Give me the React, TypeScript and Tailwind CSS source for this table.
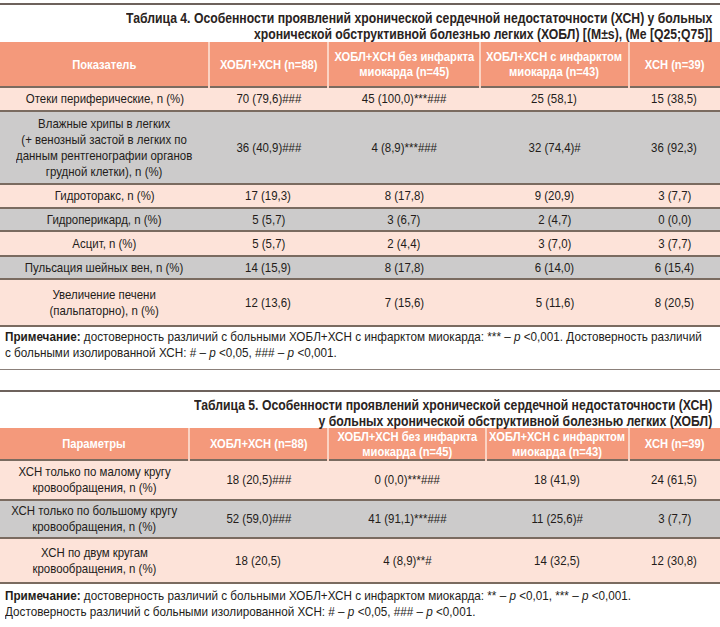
import React from 'react';

const sans = "font-['Liberation_Sans',Arial,sans-serif]";

type Row = { label: React.ReactNode; cells: string[]; tone: 'peach' | 'gray'; h: string };

const t4cols = ['w-[209px]', 'w-[119px]', 'w-[152px]', 'w-[149px]', 'w-[91px]'];
const t5cols = ['w-[189px]', 'w-[139px]', 'w-[158px]', 'w-[143px]', 'w-[91px]'];

// narrow face is not installed, so squeeze Liberation Sans sideways
function Cell({ children, head }: { children: React.ReactNode; head?: boolean }) {
  return (
    <div className="flex justify-center">
      <span
        className={`shrink-0 whitespace-nowrap inline-block text-center ${
          head ? 'scale-x-[0.86] text-[13px] leading-[15px] font-bold text-white' : 'scale-x-[0.88] text-[13px] leading-[16px] text-[#231c19]'
        }`}
      >
        {children}
      </span>
    </div>
  );
}

const t4rows: Row[] = [
  { label: 'Отеки периферические, n (%)', cells: ['70 (79,6)###', '45 (100,0)***###', '25 (58,1)', '15 (38,5)'], tone: 'peach', h: 'h-[24px]' },
  {
    label: (
      <>
        Влажные хрипы в легких
        <br />
        (+ венозный застой в легких по
        <br />
        данным рентгенографии органов
        <br />
        грудной клетки), n (%)
      </>
    ),
    cells: ['36 (40,9)###', '4 (8,9)***###', '32 (74,4)#', '36 (92,3)'],
    tone: 'gray',
    h: 'h-[73px]',
  },
  { label: 'Гидроторакс, n (%)', cells: ['17 (19,3)', '8 (17,8)', '9 (20,9)', '3 (7,7)'], tone: 'peach', h: 'h-[24px]' },
  { label: 'Гидроперикард, n (%)', cells: ['5 (5,7)', '3 (6,7)', '2 (4,7)', '0 (0,0)'], tone: 'gray', h: 'h-[23px]' },
  { label: 'Асцит, n (%)', cells: ['5 (5,7)', '2 (4,4)', '3 (7,0)', '3 (7,7)'], tone: 'peach', h: 'h-[25px]' },
  { label: 'Пульсация шейных вен, n (%)', cells: ['14 (15,9)', '8 (17,8)', '6 (14,0)', '6 (15,4)'], tone: 'gray', h: 'h-[23px]' },
  {
    label: (
      <>
        Увеличение печени
        <br />
        (пальпаторно), n (%)
      </>
    ),
    cells: ['12 (13,6)', '7 (15,6)', '5 (11,6)', '8 (20,5)'],
    tone: 'peach',
    h: 'h-[47px]',
  },
];

const t5rows: Row[] = [
  {
    label: (
      <>
        ХСН только по малому кругу
        <br />
        кровообращения, n (%)
      </>
    ),
    cells: ['18 (20,5)###', '0 (0,0)***###', '18 (41,9)', '24 (61,5)'],
    tone: 'peach',
    h: 'h-[40px]',
  },
  {
    label: (
      <>
        ХСН только по большому кругу
        <br />
        кровообращения, n (%)
      </>
    ),
    cells: ['52 (59,0)###', '41 (91,1)***###', '11 (25,6)#', '3 (7,7)'],
    tone: 'gray',
    h: 'h-[38px]',
  },
  {
    label: (
      <>
        ХСН по двум кругам
        <br />
        кровообращения, n (%)
      </>
    ),
    cells: ['18 (20,5)', '4 (8,9)**#', '14 (32,5)', '12 (30,8)'],
    tone: 'peach',
    h: 'h-[45px]',
  },
];

function DataTable({ cols, head, rows, headH }: { cols: string[]; head: React.ReactNode[]; rows: Row[]; headH: string }) {
  return (
    <table className="w-full table-fixed border-collapse">
      <colgroup>
        {cols.map((c, i) => (
          <col key={i} className={c} />
        ))}
      </colgroup>
      <thead>
        <tr className={`${headH} bg-[#f4997b] border-b-2 border-[#7a6b60]`}>
          {head.map((h, i) => (
            <th key={i} className={`${i > 0 ? 'border-l-2 border-l-[#fbd3c3]' : ''} p-0 align-middle`}>
              <Cell head>{h}</Cell>
            </th>
          ))}
        </tr>
      </thead>
      <tbody>
        {rows.map((r, i) => (
          <tr key={i} className={`${r.h} ${r.tone === 'peach' ? 'bg-[#fde3d9]' : 'bg-[#cccbcb]'} border-b-2 border-[#7a6b60]`}>
            <td className="p-0 align-middle">
              <Cell>{r.label}</Cell>
            </td>
            {r.cells.map((c, j) => (
              <td key={j} className="p-0 align-middle">
                <Cell>{c}</Cell>
              </td>
            ))}
          </tr>
        ))}
      </tbody>
    </table>
  );
}

function Title({ children, className }: { children: React.ReactNode; className: string }) {
  return (
    <div className={`flex justify-end pr-[8px] ${className}`}>
      <div className="shrink-0 whitespace-nowrap text-right origin-right scale-x-[0.872] text-[14px] leading-[16px] font-bold text-[#2a2321]">
        {children}
      </div>
    </div>
  );
}

function Note({ children, className }: { children: React.ReactNode; className: string }) {
  return (
    <div className={`pl-[5px] ${className}`}>
      <div className="whitespace-nowrap origin-left scale-x-[0.9] text-[13px] leading-[16px] text-[#231c19]">{children}</div>
    </div>
  );
}

const heads = (first: string) => [
  first,
  'ХОБЛ+ХСН (n=88)',
  <>
    ХОБЛ+ХСН без инфаркта
    <br />
    миокарда (n=45)
  </>,
  <>
    ХОБЛ+ХСН с инфарктом
    <br />
    миокарда (n=43)
  </>,
  'ХСН (n=39)',
];

export default function App() {
  return (
    <div className={`w-[720px] h-[627px] bg-white overflow-hidden ${sans} text-[#231c19]`}>
      <div className="pt-[3px]">
        <div className="h-[2px] bg-[#6d625c]" />
        <Title className="pt-[5px]">
          Таблица 4. Особенности проявлений хронической сердечной недостаточности (ХСН) у больных
          <br />
          хронической обструктивной болезнью легких (ХОБЛ) [(M±s), (Me [Q25;Q75]]
        </Title>
        <DataTable cols={t4cols} headH="h-[45px]" head={heads('Показатель')} rows={t4rows} />
        <Note className="pt-[2px]">
          <b>Примечание:</b> достоверность различий с больными ХОБЛ+ХСН с инфарктом миокарда: *** – <i>p</i> &lt;0,001. Достоверность различий
          <br />с больными изолированной ХСН: # – <i>p</i> &lt;0,05, ### – <i>p</i> &lt;0,001.
        </Note>
        <div className="mt-[8px] h-px bg-[#8b807a]" />
        <div className="mt-[20px] h-[2px] bg-[#6d625c]" />
        <Title className="pt-[5px] -mb-px">
          Таблица 5. Особенности проявлений хронической сердечной недостаточности (ХСН)
          <br />у больных хронической обструктивной болезнью легких (ХОБЛ)
        </Title>
        <DataTable cols={t5cols} headH="h-[32px]" head={heads('Параметры')} rows={t5rows} />
        <Note className="pt-[4px]">
          <b>Примечание:</b> достоверность различий с больными ХОБЛ+ХСН с инфарктом миокарда: ** – <i>p</i> &lt;0,01, *** – <i>p</i> &lt;0,001.
          <br />
          Достоверность различий с больными изолированной ХСН: # – <i>p</i> &lt;0,05, ### – <i>p</i> &lt;0,001.
        </Note>
        <div className="mt-[8px] h-[2px] bg-[#6d625c]" />
      </div>
    </div>
  );
}
